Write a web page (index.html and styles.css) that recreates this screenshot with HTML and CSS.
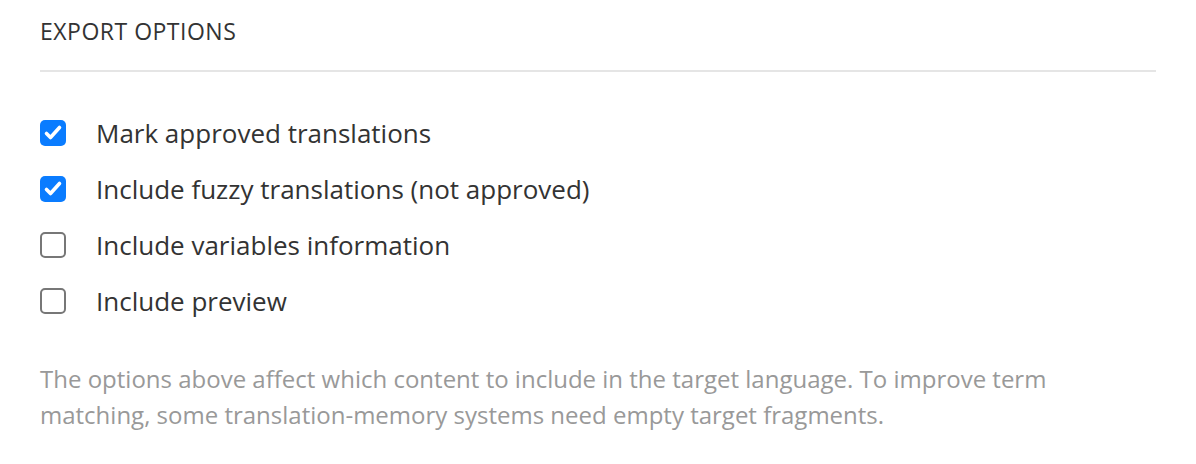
FILE: index.html
```html
<!DOCTYPE html>
<html>
<head>
<meta charset="utf-8">
<link rel="stylesheet" href="styles.css">
</head>
<body>
<section class="panel">
  <h2 class="title">EXPORT OPTIONS</h2>
  <div class="options">
    <label class="option"><span class="box checked"><svg viewBox="0 0 26 26"><path d="M6.5 13.5l4 4 9-10" fill="none" stroke="#fff" stroke-width="3.6" stroke-linecap="round" stroke-linejoin="round"/></svg></span><span class="label">Mark approved translations</span></label>
    <label class="option"><span class="box checked"><svg viewBox="0 0 26 26"><path d="M6.5 13.5l4 4 9-10" fill="none" stroke="#fff" stroke-width="3.6" stroke-linecap="round" stroke-linejoin="round"/></svg></span><span class="label">Include fuzzy translations (not approved)</span></label>
    <label class="option"><span class="box"></span><span class="label">Include variables information</span></label>
    <label class="option"><span class="box"></span><span class="label">Include preview</span></label>
  </div>
  <p class="note">The options above affect which content to include in the target language. To improve term matching, some translation-memory systems need empty target fragments.</p>
</section>
</body>
</html>
```
FILE: styles.css
```css
html, body {
  margin: 0;
  padding: 0;
  background: #fff;
}
body {
  font-family: "Open Sans", "Liberation Sans", sans-serif;
  color: #333;
}
.panel {
  padding: 16px 40px 0 40px;
}
.title {
  margin: 0;
  font-size: 23px;
  font-weight: 400;
  letter-spacing: 0.5px;
  line-height: 30px;
  color: #333;
  padding-bottom: 24px;
  border-bottom: 2px solid #e5e5e5;
}
.options {
  display: flex;
  flex-direction: column;
  gap: 20px;
  margin-top: 43px;
}
.option {
  display: flex;
  align-items: center;
  gap: 30px;
  height: 36px;
}
.box {
  width: 26px;
  height: 26px;
  box-sizing: border-box;
  border: 2px solid #777;
  border-radius: 5px;
  flex: none;
  display: flex;
}
.box svg {
  width: 26px;
  height: 26px;
}
.box.checked {
  border: none;
  background: #0a7cff;
}
.label {
  font-size: 26px;
  line-height: 36px;
  color: #333;
}
.note {
  margin: 42px 0 0 0;
  font-size: 24px;
  line-height: 36px;
  color: #999;
  max-width: 1030px;
}
```
